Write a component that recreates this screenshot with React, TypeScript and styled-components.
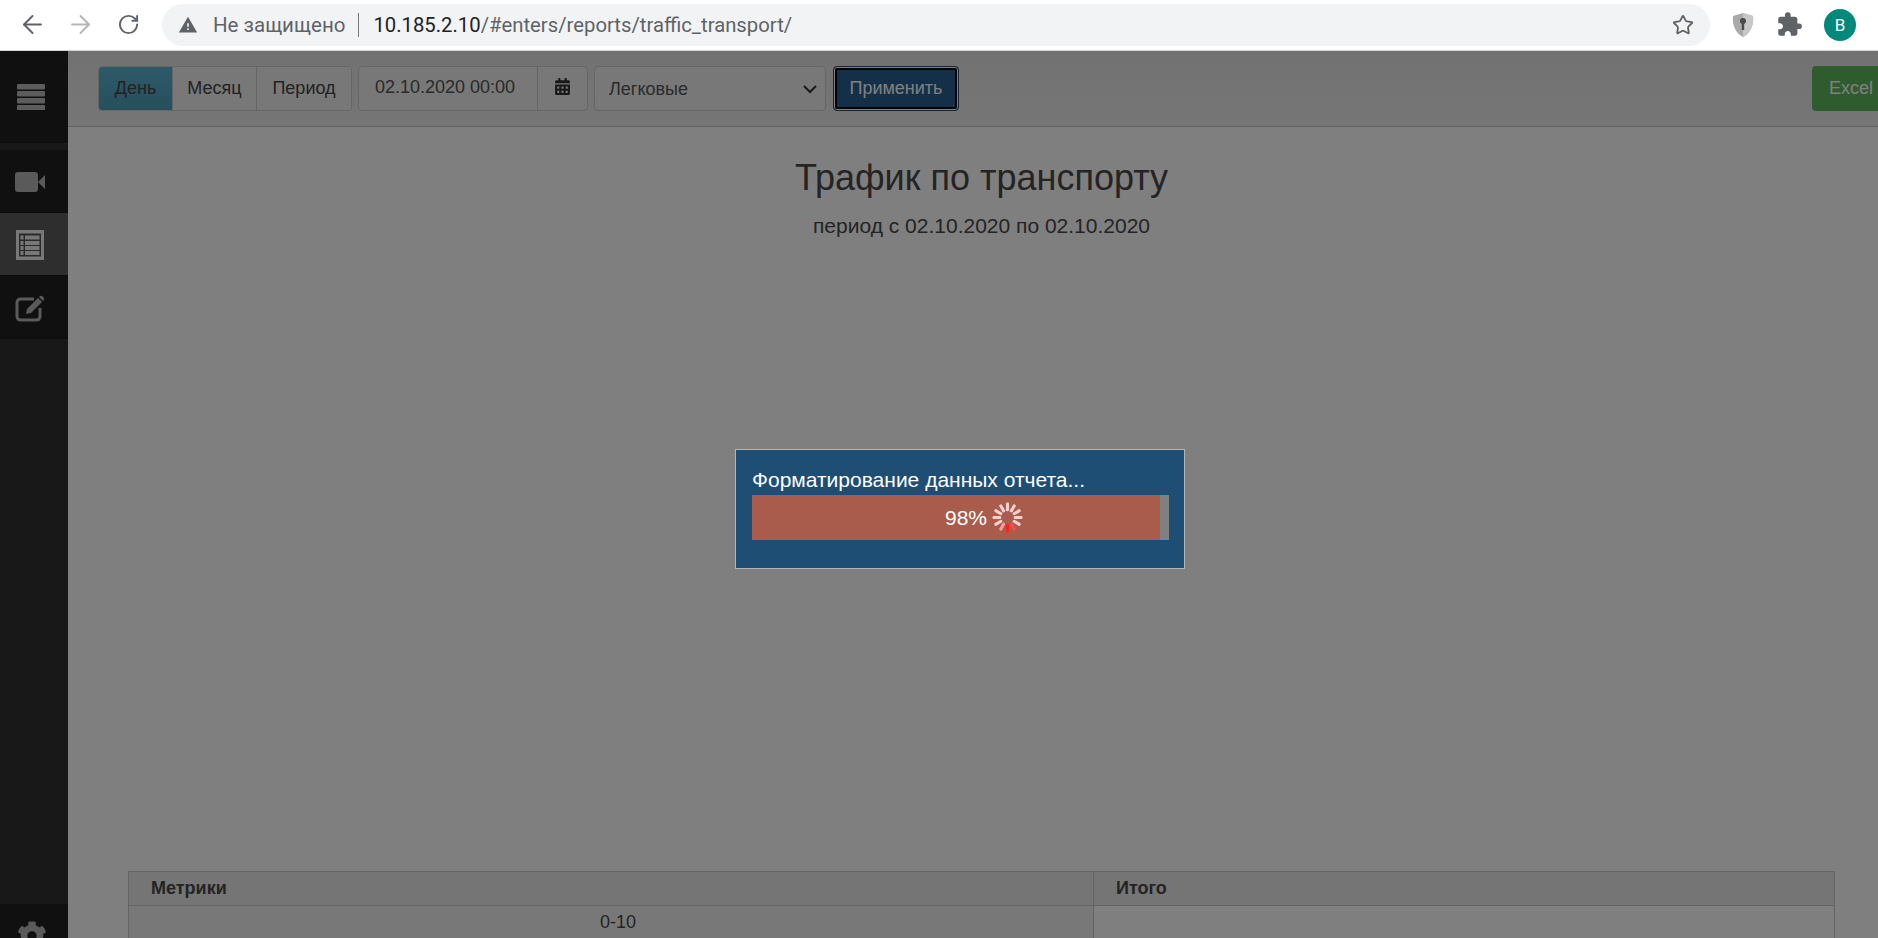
import { createGlobalStyle, styled } from "styled-components";
import { ArrowLeft, ArrowRight, RotateCw, Star } from "lucide-react";
import { FaCalendarAlt, FaCog } from "react-icons/fa";
import { MdExtension, MdWarning } from "react-icons/md";

const GlobalStyle = createGlobalStyle`
  html, body {
    margin: 0;
    padding: 0;
    width: 1878px;
    height: 938px;
    overflow: hidden;
    background: #fff;
    font-family: "Liberation Sans", Arial, sans-serif;
  }
  * { box-sizing: border-box; }
`;

function Spinner() {
  const spokes = Array.from({ length: 12 }, (_, i) => i);
  return (
    <SpinnerSvg viewBox="0 0 30 30">
      {spokes.map((i) => {
        // spoke 0 is the bottom one, the head of the spinner
        const colors: Record<number, string> = { 0: "#ff2020", 1: "#f25050", 11: "#f0a0a0" };
        return (
          <rect
            key={i}
            x="13.5"
            y="21"
            width="3"
            height="8.5"
            rx="1.3"
            fill={colors[i] || "#f8d0cc"}
            transform={`rotate(${-i * 30} 15 15)`}
          />
        );
      })}
    </SpinnerSvg>
  );
}

function App() {
  return (
    <Page>
      <GlobalStyle />
      <BrowserBar>
        <NavButton><ArrowLeft size={29} strokeWidth={1.6} color="#5f6368" /></NavButton>
        <NavButton><ArrowRight size={29} strokeWidth={1.6} color="#b4b6b9" /></NavButton>
        <NavButton><RotateCw size={23} strokeWidth={2} color="#5f6368" /></NavButton>
        <Omnibox>
          <MdWarning size={20} color="#5f6368" />
          <NotSecure>Не защищено</NotSecure>
          <OmniDivider />
          <Url>
            <b>10.185.2.10</b>/#enters/reports/traffic_transport/
          </Url>
          <StarSlot><Star size={22} strokeWidth={2} color="#5f6368" /></StarSlot>
        </Omnibox>
        <Extensions>
          <svg width="24" height="26" viewBox="0 0 24 26">
            <path d="M12 1 L22 4 C23 12 20 21 12 25 C4 21 1 12 2 4 Z" fill="#a9a9a9" />
            <path d="M12 1 L22 4 C23 12 20 21 12 25 Z" fill="#c8c8c8" />
            <circle cx="12" cy="9" r="3" fill="#4a4a4a" />
            <rect x="10.8" y="10" width="2.4" height="8" fill="#4a4a4a" />
          </svg>
          <MdExtension size={27} color="#5f6368" />
          <Avatar>B</Avatar>
        </Extensions>
      </BrowserBar>

      <Workspace>
        <Sidebar>
          <LogoCell>
            <svg width="28" height="26" viewBox="0 0 28 26">
              <rect y="0" width="28" height="5.4" rx="1" fill="#b8b8b8" />
              <rect y="7" width="28" height="5.4" rx="1" fill="#b8b8b8" />
              <rect y="14" width="28" height="5.4" rx="1" fill="#b8b8b8" />
              <rect y="21" width="28" height="5.4" rx="1" fill="#b8b8b8" />
            </svg>
          </LogoCell>
          <NavItem>
            <svg width="30" height="20" viewBox="0 0 30 20">
              <rect width="23" height="20" rx="3" fill="#b4b4b4" />
              <path d="M23 10 L30 3 V17 Z" fill="#b4b4b4" />
            </svg>
          </NavItem>
          <NavItem $active>
            <svg width="28" height="30" viewBox="0 0 28 30">
              <rect width="28" height="30" fill="#f0f0f0" />
              <rect x="3" y="3.5" width="22" height="23" fill="#555" />
              <rect x="4.5" y="5.5" width="3" height="4" fill="#f0f0f0" />
              <rect x="9" y="5.5" width="14.5" height="4" fill="#f0f0f0" />
              <rect x="4.5" y="11" width="3" height="4" fill="#f0f0f0" />
              <rect x="9" y="11" width="14.5" height="4" fill="#f0f0f0" />
              <rect x="4.5" y="16" width="3" height="4" fill="#f0f0f0" />
              <rect x="9" y="16" width="14.5" height="4" fill="#f0f0f0" />
              <rect x="4.5" y="21" width="3" height="4" fill="#f0f0f0" />
              <rect x="9" y="21" width="14.5" height="4" fill="#f0f0f0" />
            </svg>
          </NavItem>
          <NavItem>
            <svg width="30" height="28" viewBox="0 0 30 28">
              <path
                d="M19 5 H6 Q2 5 2 9 V22 Q2 26 6 26 H21 Q25 26 25 22 V14"
                fill="none"
                stroke="#b4b4b4"
                strokeWidth="3"
              />
              <path d="M11 20 L12 15 L23 4 L27 8 L16 19 Z" fill="#b4b4b4" />
              <path d="M24.5 2.5 Q26 1 27.5 2.5 L28.5 3.5 Q30 5 28.5 6.5 L28 7 L24 3 Z" fill="#b4b4b4" />
            </svg>
          </NavItem>
          <SidebarFill />
          <SettingsCell><FaCog size={30} color="#b4b4b4" /></SettingsCell>
        </Sidebar>

        <Main>
          <Toolbar>
            <ButtonGroup>
              <ModeButton $active $width={73}>День</ModeButton>
              <ModeButton $width={84}>Месяц</ModeButton>
              <ModeButton $width={95}>Период</ModeButton>
            </ButtonGroup>
            <DateGroup>
              <DateValue>02.10.2020 00:00</DateValue>
              <DateAddon><FaCalendarAlt size={17} color="#333" /></DateAddon>
            </DateGroup>
            <SelectBox>
              Легковые
              <svg width="14" height="9" viewBox="0 0 14 9">
                <path d="M1 1 L7 7 L13 1" fill="none" stroke="#333" strokeWidth="2" />
              </svg>
            </SelectBox>
            <ApplyButton>Применить</ApplyButton>
            <ExcelButton>Excel</ExcelButton>
          </Toolbar>
          <ReportTitle>Трафик по транспорту</ReportTitle>
          <ReportPeriod>период с 02.10.2020 по 02.10.2020</ReportPeriod>
          <ChartSpace />
          <MetricsTable>
            <thead>
              <tr>
                <HeadCell $wide>Метрики</HeadCell>
                <HeadCell>Итого</HeadCell>
              </tr>
            </thead>
            <tbody>
              <tr>
                <BodyCell $striped>0-10</BodyCell>
                <BodyCell />
              </tr>
            </tbody>
          </MetricsTable>
        </Main>

        <Backdrop />
        <ProgressDialog>
          <ProgressLabel>Форматирование данных отчета...</ProgressLabel>
          <ProgressTrack>
            <ProgressFill style={{ width: `${(408 / 417) * 100}%` }} />
            <ProgressText>
              98% <Spinner />
            </ProgressText>
          </ProgressTrack>
        </ProgressDialog>
      </Workspace>
    </Page>
  );
}

export default App;

const Page = styled.div`
  width: 1878px;
  height: 938px;
  display: flex;
  flex-direction: column;
  overflow: hidden;
`;

const BrowserBar = styled.header`
  height: 51px;
  flex: none;
  display: flex;
  align-items: center;
  padding: 0 0 1px 20px;
  background: #fff;
  border-bottom: 1px solid #d4d4d4;
  font-family: Roboto, "Liberation Sans", sans-serif;
`;

const NavButton = styled.div`
  width: 24px;
  height: 24px;
  margin-right: 24px;
  display: flex;
  align-items: center;
  justify-content: center;
  flex: none;

  svg {
    flex: none;
  }
`;

const Omnibox = styled.div`
  width: 1548px;
  height: 42px;
  margin-left: -2px;
  padding: 0 16px 0 16px;
  display: flex;
  align-items: center;
  background: #f1f3f4;
  border-radius: 21px;
`;

const NotSecure = styled.span`
  margin-left: 15px;
  font-size: 20.5px;
  color: #5f6368;
`;

const OmniDivider = styled.span`
  width: 1px;
  height: 24px;
  margin: 0 14px 0 13px;
  background: #777;
`;

const Url = styled.span`
  font-size: 20.3px;
  color: #5f6368;

  b {
    font-weight: 400;
    color: #202124;
  }
`;

const StarSlot = styled.span`
  margin-left: auto;
  display: flex;
`;

const Extensions = styled.div`
  display: flex;
  align-items: center;
  gap: 21px;
  margin-left: 21px;
`;

const Avatar = styled.div`
  width: 32px;
  height: 32px;
  border-radius: 50%;
  background: #00897b;
  color: #fff;
  font-size: 17px;
  display: flex;
  align-items: center;
  justify-content: center;
`;

const Workspace = styled.div`
  flex: 1;
  min-height: 0;
  position: relative;
  display: flex;
  overflow: hidden;
`;

const Sidebar = styled.nav`
  width: 68px;
  flex: none;
  display: flex;
  flex-direction: column;
  background: #303030;
`;

const LogoCell = styled.div`
  height: 92px;
  flex: none;
  margin-bottom: 7px;
  padding: 1px 6px 0 0;
  display: flex;
  align-items: center;
  justify-content: center;
  background: #202020;
  border-bottom: 1px solid #1a1a1a;
`;

const NavItem = styled.div<{ $active?: boolean }>`
  height: 63px;
  flex: none;
  padding: 2px 8px 0 0;
  display: flex;
  align-items: center;
  justify-content: center;
  background: ${(p) => (p.$active ? "#5c5c5c" : "#202020")};
  border-bottom: 1px solid #1a1a1a;
`;

const SidebarFill = styled.div`
  flex: 1;
`;

const SettingsCell = styled.div`
  height: 34px;
  flex: none;
  display: flex;
  justify-content: center;
  padding: 17px 4px 0 0;
  background: #202020;
`;

const Main = styled.main`
  flex: 1;
  min-width: 0;
  display: flex;
  flex-direction: column;
  background: #fff;
  color: #484848;
`;

const Toolbar = styled.div`
  height: 76px;
  flex: none;
  display: flex;
  align-items: flex-start;
  gap: 6px;
  padding: 15px 0 0 30px;
  background: linear-gradient(#e4e4e4, #ececec);
  border-bottom: 1px solid #c4c4c4;
`;

const ButtonGroup = styled.div`
  display: flex;
  height: 45px;
  border: 1px solid #ccc;
  border-radius: 4px;
  overflow: hidden;
`;

const ModeButton = styled.div<{ $active?: boolean; $width: number }>`
  width: ${(p) => p.$width}px;
  display: flex;
  align-items: center;
  justify-content: center;
  font-size: 18px;
  color: #444;
  background: ${(p) => (p.$active ? "linear-gradient(#5ab5d2, #4f9eb8)" : "#f0f0f0")};
  & + & {
    border-left: 1px solid #ccc;
  }
`;

const DateGroup = styled.div`
  width: 230px;
  height: 45px;
  display: flex;
  background: #f0f0f0;
  border: 1px solid #ccc;
  border-radius: 4px;
`;

const DateValue = styled.div`
  flex: 1;
  padding: 0 0 2px 16px;
  display: flex;
  align-items: center;
  font-size: 18px;
  color: #555;
`;

const DateAddon = styled.div`
  width: 50px;
  display: flex;
  align-items: center;
  justify-content: center;
  border-left: 1px solid #ccc;
  padding-bottom: 4px;
`;

const SelectBox = styled.div`
  width: 232px;
  height: 45px;
  padding: 1px 8px 0 14px;
  display: flex;
  align-items: center;
  justify-content: space-between;
  font-size: 18px;
  color: #555;
  background: #f0f0f0;
  border: 1px solid #ccc;
  border-radius: 4px;
`;

const ApplyButton = styled.div`
  width: 126px;
  height: 45px;
  margin-left: 1px;
  display: flex;
  align-items: center;
  justify-content: center;
  font-size: 18px;
  color: #fff;
  background: #286090;
  border: 1px solid #204d74;
  border-radius: 4px;
  box-shadow: inset 0 0 0 1px #fff, inset 0 0 0 3px #000;
`;

const ExcelButton = styled.div`
  width: 80px;
  height: 45px;
  margin-left: auto;
  margin-right: -14px;
  padding-left: 17px;
  display: flex;
  align-items: center;
  font-size: 18px;
  color: #fff;
  background: #5cb85c;
  border-radius: 4px 0 0 4px;
`;

const ReportTitle = styled.h2`
  margin: 31px 0 0;
  padding-left: 17px;
  font-size: 36px;
  line-height: 40px;
  font-weight: 400;
  text-align: center;
`;

const ReportPeriod = styled.div`
  margin-top: 17px;
  padding-left: 17px;
  font-size: 21px;
  line-height: 22px;
  text-align: center;
`;

const ChartSpace = styled.div`
  flex: none;
  height: 634px;
`;

const MetricsTable = styled.table`
  width: 1707px;
  flex: none;
  margin-left: 60px;
  border-collapse: collapse;
  table-layout: fixed;
  font-size: 18px;
  color: #484848;
`;

const HeadCell = styled.th<{ $wide?: boolean }>`
  width: ${(p) => (p.$wide ? "965px" : "auto")};
  height: 34px;
  padding: 0 0 0 22px;
  text-align: left;
  background: #eaeaea;
  border: 1px solid #c8c8c8;
`;

const BodyCell = styled.td<{ $striped?: boolean }>`
  height: 34px;
  padding: 0 0 0 14px;
  text-align: center;
  background: ${(p) => (p.$striped ? "#f1f1f1" : "#fff")};
  border: 1px solid #c8c8c8;
`;

const Backdrop = styled.div`
  position: absolute;
  inset: 0;
  background: rgba(0, 0, 0, 0.5);
`;

const ProgressDialog = styled.div`
  position: absolute;
  left: 735px;
  top: 398px;
  width: 450px;
  height: 120px;
  padding: 16px 15px 0 16px;
  background: #1f4e75;
  border: 1px solid #b4b4b4;
  color: #fff;
`;

const ProgressLabel = styled.div`
  font-size: 21px;
  line-height: 27px;
  margin-bottom: 2px;
`;

const ProgressTrack = styled.div`
  position: relative;
  height: 45px;
  background: #808080;
`;

const ProgressFill = styled.div`
  height: 100%;
  background: #a95c4b;
`;

const ProgressText = styled.div`
  position: absolute;
  inset: 0;
  display: flex;
  align-items: center;
  justify-content: center;
  gap: 5px;
  padding-left: 47px;
  font-size: 21px;
`;

const SpinnerSvg = styled.svg`
  width: 31px;
  height: 31px;
`;
